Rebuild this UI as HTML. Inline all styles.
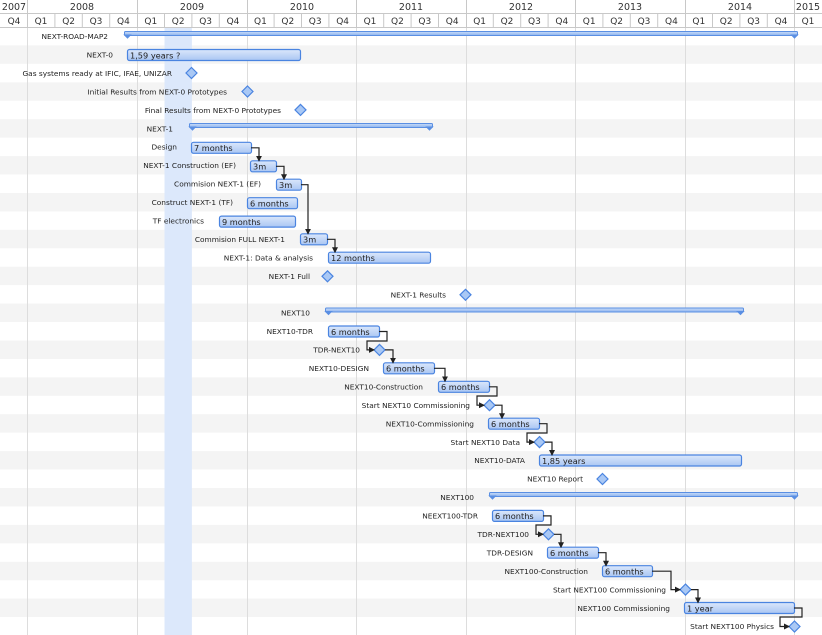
<!DOCTYPE html>
<html><head><meta charset="utf-8"><style>
html,body{margin:0;padding:0;background:#fff;}
svg{display:block;font-family:"DejaVu Sans","Liberation Sans",sans-serif;}
</style></head><body>
<svg width="822" height="635" viewBox="0 0 822 635" xmlns="http://www.w3.org/2000/svg">
<defs>
<linearGradient id="bg" x1="0" y1="0" x2="0" y2="1"><stop offset="0" stop-color="#dbe7fb"/><stop offset="1" stop-color="#aac6f3"/></linearGradient>
<linearGradient id="sg" x1="0" y1="0" x2="0" y2="1"><stop offset="0" stop-color="#c9dcf8"/><stop offset="1" stop-color="#8db3ee"/></linearGradient>
<marker id="ar" markerWidth="6" markerHeight="6" refX="5" refY="3" orient="auto" markerUnits="userSpaceOnUse"><path d="M0,0 L6,3 L0,6 z" fill="#222"/></marker>
</defs>
<g fill="#f4f4f4">
<rect x="0" y="45.4" width="822" height="18.44"/><rect x="0" y="82.3" width="822" height="18.44"/><rect x="0" y="119.2" width="822" height="18.44"/><rect x="0" y="156.1" width="822" height="18.44"/><rect x="0" y="193" width="822" height="18.44"/><rect x="0" y="229.8" width="822" height="18.44"/><rect x="0" y="266.7" width="822" height="18.44"/><rect x="0" y="303.6" width="822" height="18.44"/><rect x="0" y="340.5" width="822" height="18.44"/><rect x="0" y="377.4" width="822" height="18.44"/><rect x="0" y="414.2" width="822" height="18.44"/><rect x="0" y="451.1" width="822" height="18.44"/><rect x="0" y="488" width="822" height="18.44"/><rect x="0" y="524.9" width="822" height="18.44"/><rect x="0" y="561.8" width="822" height="18.44"/><rect x="0" y="598.6" width="822" height="18.44"/>
</g>
<rect x="164.5" y="27" width="27.4" height="608" fill="#dce8fb"/>
<g stroke="#dddddd" stroke-width="1">
<line x1="27.5" y1="27" x2="27.5" y2="635"/><line x1="137.5" y1="27" x2="137.5" y2="635"/><line x1="247.5" y1="27" x2="247.5" y2="635"/><line x1="356.5" y1="27" x2="356.5" y2="635"/><line x1="466.5" y1="27" x2="466.5" y2="635"/><line x1="575.5" y1="27" x2="575.5" y2="635"/><line x1="685.5" y1="27" x2="685.5" y2="635"/><line x1="794.5" y1="27" x2="794.5" y2="635"/>
</g>
<g stroke="#c8c8c8" stroke-width="1">
<line x1="0" y1="13.5" x2="822" y2="13.5"/><line x1="0" y1="27.5" x2="822" y2="27.5"/>
<line x1="27.5" y1="0" x2="27.5" y2="27"/><line x1="137.5" y1="0" x2="137.5" y2="27"/><line x1="247.5" y1="0" x2="247.5" y2="27"/><line x1="356.5" y1="0" x2="356.5" y2="27"/><line x1="466.5" y1="0" x2="466.5" y2="27"/><line x1="575.5" y1="0" x2="575.5" y2="27"/><line x1="685.5" y1="0" x2="685.5" y2="27"/><line x1="794.5" y1="0" x2="794.5" y2="27"/>
<line x1="54.9" y1="13" x2="54.9" y2="27"/><line x1="82.3" y1="13" x2="82.3" y2="27"/><line x1="109.7" y1="13" x2="109.7" y2="27"/>
<line x1="164.5" y1="13" x2="164.5" y2="27"/><line x1="191.9" y1="13" x2="191.9" y2="27"/><line x1="219.3" y1="13" x2="219.3" y2="27"/>
<line x1="274.1" y1="13" x2="274.1" y2="27"/><line x1="301.5" y1="13" x2="301.5" y2="27"/><line x1="328.9" y1="13" x2="328.9" y2="27"/>
<line x1="383.7" y1="13" x2="383.7" y2="27"/><line x1="411.1" y1="13" x2="411.1" y2="27"/><line x1="438.5" y1="13" x2="438.5" y2="27"/>
<line x1="493.3" y1="13" x2="493.3" y2="27"/><line x1="520.7" y1="13" x2="520.7" y2="27"/><line x1="548.1" y1="13" x2="548.1" y2="27"/>
<line x1="602.9" y1="13" x2="602.9" y2="27"/><line x1="630.3" y1="13" x2="630.3" y2="27"/><line x1="657.7" y1="13" x2="657.7" y2="27"/>
<line x1="712.5" y1="13" x2="712.5" y2="27"/><line x1="739.9" y1="13" x2="739.9" y2="27"/><line x1="767.3" y1="13" x2="767.3" y2="27"/>
</g>
<g font-size="9.5" fill="#333" text-anchor="middle">
<text x="14" y="10">2007</text><text x="82" y="10">2008</text><text x="192" y="10">2009</text><text x="302" y="10">2010</text><text x="411" y="10">2011</text><text x="521" y="10">2012</text><text x="630" y="10">2013</text><text x="740" y="10">2014</text><text x="808" y="10">2015</text>
</g>
<g font-size="9" fill="#333" text-anchor="middle">
<text x="14" y="24">Q4</text>
<text x="41" y="24">Q1</text><text x="68.6" y="24">Q2</text><text x="96" y="24">Q3</text><text x="123.4" y="24">Q4</text>
<text x="150.8" y="24">Q1</text><text x="178.2" y="24">Q2</text><text x="205.6" y="24">Q3</text><text x="233" y="24">Q4</text>
<text x="260.4" y="24">Q1</text><text x="287.8" y="24">Q2</text><text x="315.2" y="24">Q3</text><text x="342.6" y="24">Q4</text>
<text x="370" y="24">Q1</text><text x="397.4" y="24">Q2</text><text x="424.8" y="24">Q3</text><text x="452.2" y="24">Q4</text>
<text x="479.6" y="24">Q1</text><text x="507" y="24">Q2</text><text x="534.4" y="24">Q3</text><text x="561.8" y="24">Q4</text>
<text x="589.2" y="24">Q1</text><text x="616.6" y="24">Q2</text><text x="644" y="24">Q3</text><text x="671.4" y="24">Q4</text>
<text x="698.8" y="24">Q1</text><text x="726.2" y="24">Q2</text><text x="753.6" y="24">Q3</text><text x="781" y="24">Q4</text>
<text x="808" y="24">Q1</text>
</g>
<g fill="url(#sg)" stroke="#5a8fe3" stroke-width="1">
<rect x="124.5" y="31.5" width="673" height="4" rx="1"/><path d="M124.5,35 h6 l-3,3 z M791.5,35 h6 l-3,3 z" fill="#5a8fe3"/>
<rect x="189.5" y="123.5" width="243" height="4" rx="1"/><path d="M189.5,127 h6 l-3,3 z M426.5,127 h6 l-3,3 z" fill="#5a8fe3"/>
<rect x="325.5" y="308" width="418" height="4" rx="1"/><path d="M325.5,311.5 h6 l-3,3 z M737.5,311.5 h6 l-3,3 z" fill="#5a8fe3"/>
<rect x="489.5" y="492.5" width="308" height="4" rx="1"/><path d="M489.5,496 h6 l-3,3 z M791.5,496 h6 l-3,3 z" fill="#5a8fe3"/>
</g>
<g fill="url(#bg)" stroke="#4a84e0" stroke-width="1.2">
<rect x="127.5" y="49.5" width="173" height="11" rx="2"/>
<rect x="191.5" y="142.3" width="60" height="11" rx="2"/>
<rect x="250.5" y="160.8" width="26" height="11" rx="2"/>
<rect x="276.5" y="179.2" width="25" height="11" rx="2"/>
<rect x="247.5" y="197.7" width="50" height="11" rx="2"/>
<rect x="219.5" y="216.1" width="76" height="11" rx="2"/>
<rect x="300.5" y="233.8" width="27" height="11" rx="2"/>
<rect x="328.5" y="252.2" width="102" height="11" rx="2"/>
<rect x="328.5" y="326" width="51" height="11" rx="2"/>
<rect x="383.5" y="362.8" width="51" height="11" rx="2"/>
<rect x="438.5" y="381.3" width="51" height="11" rx="2"/>
<rect x="488.5" y="418.2" width="51" height="11" rx="2"/>
<rect x="539.5" y="455" width="202" height="11" rx="2"/>
<rect x="492.5" y="510.4" width="51" height="11" rx="2"/>
<rect x="547.5" y="547.2" width="51" height="11" rx="2"/>
<rect x="602.5" y="565.7" width="50" height="11" rx="2"/>
<rect x="684.5" y="602.5" width="110" height="11" rx="2"/>
</g>
<g font-size="8.2" fill="#222">
<text x="130" y="58.3">1,59 years ?</text>
<text x="194" y="151">7 months</text>
<text x="253" y="169.5">3m</text>
<text x="279" y="188">3m</text>
<text x="250" y="206.4">6 months</text>
<text x="222" y="224.8">9 months</text>
<text x="303" y="242.5">3m</text>
<text x="331" y="261">12 months</text>
<text x="331" y="334.8">6 months</text>
<text x="386" y="371.6">6 months</text>
<text x="441" y="390">6 months</text>
<text x="491" y="427">6 months</text>
<text x="542" y="463.8">1,85 years</text>
<text x="495" y="519.2">6 months</text>
<text x="550" y="556">6 months</text>
<text x="605" y="574.5">6 months</text>
<text x="687" y="611.3">1 year</text>
</g>
<g fill="#a9c8f5" stroke="#4a84e0" stroke-width="1.2">
<path d="M191.5,67.5 l5.5,5.5 l-5.5,5.5 l-5.5,-5.5 z"/>
<path d="M247.5,86 l5.5,5.5 l-5.5,5.5 l-5.5,-5.5 z"/>
<path d="M300.5,104.4 l5.5,5.5 l-5.5,5.5 l-5.5,-5.5 z"/>
<path d="M327.5,270.8 l5.5,5.5 l-5.5,5.5 l-5.5,-5.5 z"/>
<path d="M465.5,289.3 l5.5,5.5 l-5.5,5.5 l-5.5,-5.5 z"/>
<path d="M379.5,344.4 l5.5,5.5 l-5.5,5.5 l-5.5,-5.5 z"/>
<path d="M489.5,399.7 l5.5,5.5 l-5.5,5.5 l-5.5,-5.5 z"/>
<path d="M539.5,436.6 l5.5,5.5 l-5.5,5.5 l-5.5,-5.5 z"/>
<path d="M602.5,473.5 l5.5,5.5 l-5.5,5.5 l-5.5,-5.5 z"/>
<path d="M548.5,528.8 l5.5,5.5 l-5.5,5.5 l-5.5,-5.5 z"/>
<path d="M685.5,584.1 l5.5,5.5 l-5.5,5.5 l-5.5,-5.5 z"/>
<path d="M794.5,621 l5.5,5.5 l-5.5,5.5 l-5.5,-5.5 z"/>
</g>
<g fill="none" stroke="#222" stroke-width="1.2" marker-end="url(#ar)">
<path d="M251,147.8 H259 V160.8"/>
<path d="M276,166.3 H284 V179.2"/>
<path d="M301,184.7 H308 V233.8"/>
<path d="M327,239.3 H335 V252.2"/>
<path d="M379,331.5 H387 V341 H367 V349.9 H374"/>
<path d="M385,349.9 H393 V362.8"/>
<path d="M434,368.3 H445 V381.3"/>
<path d="M489,386.8 H497 V396 H477 V405.2 H484"/>
<path d="M495,405.2 H502 V418.2"/>
<path d="M539,423.7 H547 V433 H527 V442.1 H534"/>
<path d="M545,442.1 H552 V455"/>
<path d="M543,515.9 H551 V525 H536 V534.3 H543"/>
<path d="M554,534.3 H561 V547.2"/>
<path d="M598,552.7 H606 V565.7"/>
<path d="M652,571.2 H671 V589.6 H680"/>
<path d="M691,589.6 H698 V602.5"/>
<path d="M794,608 H802 V617 H780 V626.5 H789"/>
</g>
<g font-size="7.4" fill="#222" text-anchor="end">
<text x="108" y="39">NEXT-ROAD-MAP2</text>
<text x="113" y="57.5">NEXT-0</text>
<text x="172" y="76">Gas systems ready at IFIC, IFAE, UNIZAR</text>
<text x="227" y="94.4">Initial Results from NEXT-0 Prototypes</text>
<text x="281" y="112.8">Final Results from NEXT-0 Prototypes</text>
<text x="173" y="131.3">NEXT-1</text>
<text x="177" y="149.7">Design</text>
<text x="236" y="168.2">NEXT-1 Construction (EF)</text>
<text x="261" y="186.6">Commision NEXT-1 (EF)</text>
<text x="233" y="205">Construct NEXT-1 (TF)</text>
<text x="204" y="223.5">TF electronics</text>
<text x="285" y="241.9">Commision FULL NEXT-1</text>
<text x="313" y="260.4">NEXT-1: Data &amp; analysis</text>
<text x="310" y="278.8">NEXT-1 Full</text>
<text x="446" y="297.3">NEXT-1 Results</text>
<text x="310" y="315.7">NEXT10</text>
<text x="313" y="334.1">NEXT10-TDR</text>
<text x="360" y="352.6">TDR-NEXT10</text>
<text x="369" y="371">NEXT10-DESIGN</text>
<text x="423" y="389.5">NEXT10-Construction</text>
<text x="470" y="407.9">Start NEXT10 Commissioning</text>
<text x="474" y="426.4">NEXT10-Commissioning</text>
<text x="520" y="444.8">Start NEXT10 Data</text>
<text x="525" y="463.2">NEXT10-DATA</text>
<text x="583" y="481.7">NEXT10 Report</text>
<text x="474" y="500.1">NEXT100</text>
<text x="478" y="518.6">NEEXT100-TDR</text>
<text x="529" y="537">TDR-NEXT100</text>
<text x="533" y="555.4">TDR-DESIGN</text>
<text x="588" y="573.9">NEXT100-Construction</text>
<text x="666" y="592.3">Start NEXT100 Commissioning</text>
<text x="670" y="610.8">NEXT100 Commissioning</text>
<text x="774" y="629.2">Start NEXT100 Physics</text>
</g>
</svg>
</body></html>
